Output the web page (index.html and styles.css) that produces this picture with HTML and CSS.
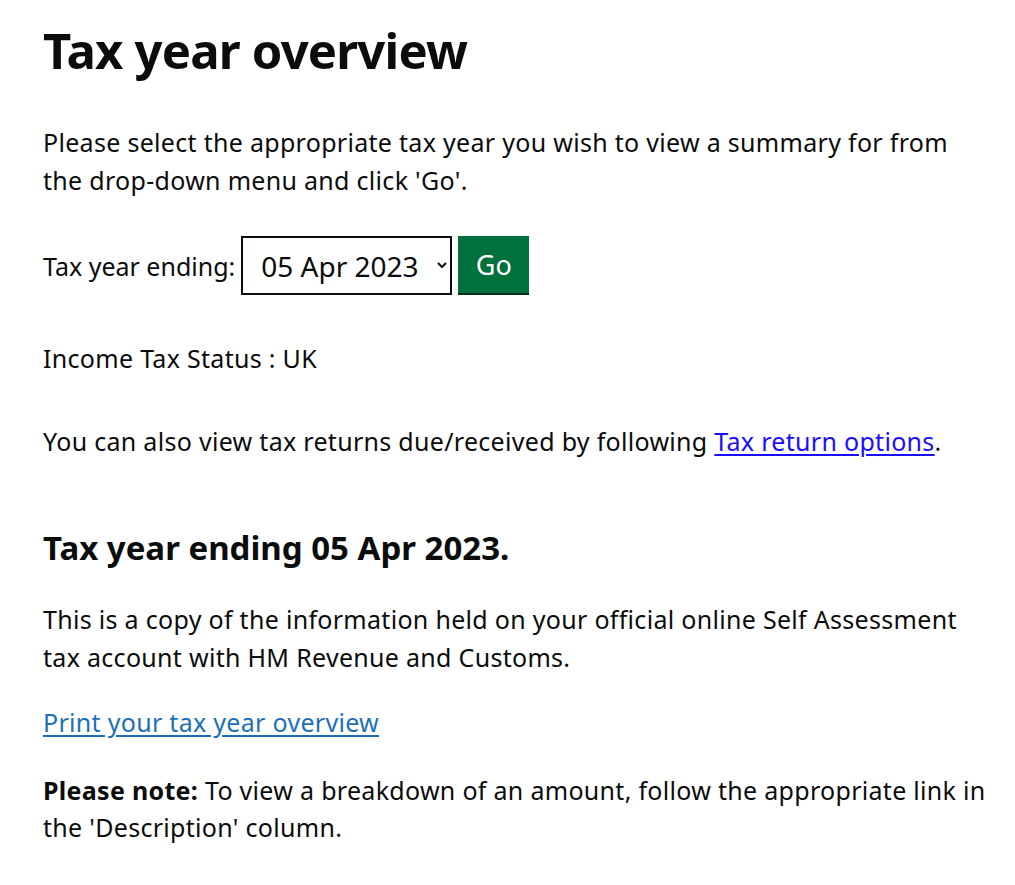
FILE: index.html
```html
<!DOCTYPE html>
<html lang="en">
<head>
    <meta charset="UTF-8">
    <meta name="viewport" content="width=device-width, initial-scale=1.0">
    <title>Tax year overview</title>
    <link rel="stylesheet" href="styles.css">
</head>
<body>
    <main class="page">
        <h1 class="heading-xl">Tax year overview</h1>

        <p class="body intro">Please select the appropriate tax year you wish to view a summary for from the drop-down menu and click 'Go'.</p>

        <!-- Tax year picker -->
        <form class="year-form" action="#">
            <label class="year-label" for="taxYear">Tax year ending:</label>
            <select class="year-select" id="taxYear" name="taxYear">
                <option>05 Apr 2023</option>
                <option>05 Apr 2022</option>
                <option>05 Apr 2021</option>
            </select>
            <button class="go-button" type="submit">Go</button>
        </form>

        <p class="body status">Income Tax Status : UK</p>

        <p class="body returns">You can also view tax returns due/received by following <a class="plain-link" href="#">Tax return options</a>.</p>

        <h2 class="heading-l">Tax year ending 05 Apr 2023.</h2>

        <p class="body copy">This is a copy of the information held on your official online Self Assessment tax account with HM Revenue and Customs.</p>

        <p class="body print"><a class="govuk-link" href="#">Print your tax year overview</a></p>

        <p class="body note"><strong>Please note:</strong> To view a breakdown of an amount, follow the appropriate link in the 'Description' column.</p>
    </main>
</body>
</html>
```

FILE: styles.css
```css
body {
    margin: 0;
    padding: 0;
    background: #fff;
    color: #0b0c0c;
    font-family: "Noto Sans", "Liberation Sans", Arial, sans-serif;
}

.page {
    padding: 20px 28px 0 43px;
}

.heading-xl {
    margin: 0;
    font-size: 49px;
    line-height: 60px;
    font-weight: 700;
    letter-spacing: -0.8px;
}

.heading-l {
    margin: 68px 0 0;
    font-size: 33px;
    line-height: 40px;
    font-weight: 700;
}

.body {
    margin: 0;
    font-size: 25px;
    line-height: 37.5px;
    letter-spacing: 0.3px;
}

.intro {
    margin-top: 44px;
}

.status {
    margin-top: 45px;
}

.returns {
    margin-top: 45px;
}

.copy {
    margin-top: 33px;
}

.print {
    margin-top: 28px;
}

.note {
    margin-top: 30px;
}

/* Select + button row */
.year-form {
    display: flex;
    align-items: center;
    margin-top: 37px;
}

.year-label {
    font-size: 25px;
    margin-right: 6px;
}

.year-select {
    box-sizing: border-box;
    width: 211px;
    height: 59px;
    padding: 0 6px 0 14px;
    border: 2px solid #0b0c0c;
    border-radius: 0;
    background: #fff;
    color: #0b0c0c;
    font-family: inherit;
    font-size: 28px;
}

.go-button {
    box-sizing: border-box;
    width: 71px;
    height: 57px;
    margin: 0 0 2px 6px;
    padding: 0;
    border: 0;
    border-radius: 0;
    background: #00703c;
    box-shadow: 0 2px 0 #002d18;
    color: #fff;
    font-family: inherit;
    font-size: 27px;
    cursor: pointer;
}

.plain-link {
    color: #1a0dff;
    text-underline-offset: 3px;
}

.govuk-link {
    color: #1d70b8;
    text-underline-offset: 3px;
}
```
